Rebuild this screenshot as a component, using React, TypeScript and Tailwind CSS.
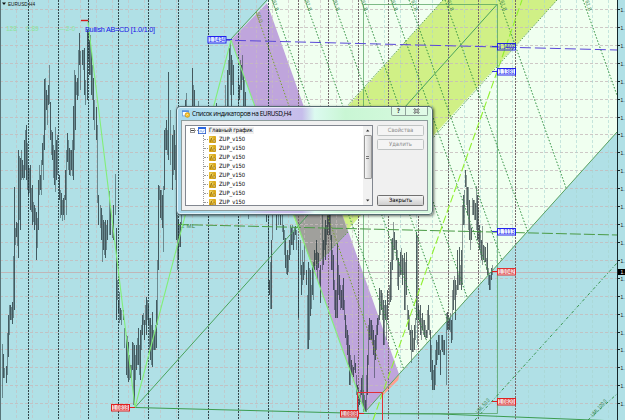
import React from 'react';
import clsx from 'clsx';

// x, high, low for every bar of the chart
const BARS = `0,366,405 2,344,398 3,354,378 4,368,378 6,366,383 7,333,375 8,315,357 9,305,335 10,305,320 11,307,320 12,302,324 13,256,318 14,187,310
15,228,245 16,222,237 17,223,246 18,150,258 19,156,220 20,158,230 21,150,180 22,160,178 23,165,180 24,140,178 25,130,170 26,125,180 27,143,190 28,165,195 29,168,193 30,165,210 31,188,212 32,185,225 33,202,222 34,205,230 35,208,225 36,212,260 37,218,248 38,180,230 39,165,195 40,175,190 41,160,195 42,143,165 43,135,180 44,79,150 45,78,130 46,90,110 47,95,125 48,85,105 49,65,104 50,102,140 51,130,155 52,132,160 53,145,178 54,150,185 55,127,192 56,140,180 57,135,175
59,175,200 60,190,218 61,193,215 62,200,221 63,198,215 64,195,220 65,170,200 66,150,215 67,133,162 68,140,170 69,148,175 70,150,176 71,150,170 72,140,176 73,106,180 74,70,150 75,75,130 76,82,95 77,78,100 78,50,96 79,33,65 80,51,90 82,50,65 83,50,70 84,48,95 85,80,105 87,30,100 88,20,60 89,40,75 90,35,75 91,50,95 92,65,100 93,78,120 94,100,130 96,107,140 97,125,203 98,195,225
100,205,228 101,208,240 102,215,262 103,220,250 104,222,255 105,220,258 106,225,250 107,220,240 109,191,235 110,205,235 112,225,238 113,205,240 115,174,215 116,228,320 117,280,300 118,300,313 119,292,323 120,308,320 121,310,325 123,310,320 124,328,348 126,335,375 127,336,378 128,342,382 129,355,380 130,365,378 131,365,378 132,342,370 133,343,405 134,345,405 135,355,380 136,345,370 137,338,365 138,328,365 139,345,375 140,330,380 141,325,350 142,315,335 143,313,325 144,320,340 145,305,325 146,297,335 147,300,320 148,305,325 149,318,350 150,318,360 151,325,365 152,312,367 153,330,350 154,332,350 155,325,350 156,300,348 157,260,325
158,185,270 159,186,200 160,190,218 161,190,220 162,195,228 163,186,252 164,130,190 165,128,150 166,120,150 167,130,155 168,72,160 170,110,165 172,135,190 173,125,175 174,130,170 175,145,180 176,208,240 177,215,270 178,220,260 179,225,247 180,222,247 181,210,225 185,100,106 186,93,106 192,68,106 193,85,106 194,90,106 198,101,106 216,103,106 225,85,106 227,70,106 228,60,106 229,48,75 230,42,95 231,55,106 232,60,85 233,65,95 238,77,105 239,85,100 240,60,90 241,65,90 242,55,80 243,75,106 244,80,106 245,92,106
248,212,219 266,212,222 268,212,290 269,280,295 270,262,309 271,240,309 272,212,240 276,212,230 278,213,225 280,212,225 282,212,232 283,225,240 284,230,255 285,238,268 286,255,274 287,250,275 288,255,272 289,240,260 290,225,255 291,228,245 292,225,245 293,232,250 294,227,240 295,226,235 296,230,250 298,240,318 300,240,275 301,265,295 302,250,285 303,262,280 304,245,275 306,270,285 307,295,349 308,262,349 309,268,340 310,270,316 311,285,309 312,265,295 313,262,300 314,250,270 315,253,260 316,240,270 317,252,280 318,253,268 319,270,285 320,265,303
322,212,270 323,240,265 324,228,250 325,220,260 326,225,245 327,212,235 328,212,225 329,213,235 330,212,240 331,235,270 332,250,270 333,255,290 334,280,310 335,290,318 336,290,318 337,243,318 338,265,295 339,275,300 340,285,310 341,290,308 342,285,310 343,278,310 344,300,320 345,315,338 346,325,345 347,330,355 348,335,365 349,345,385 350,355,385 351,360,375 352,365,375 353,367,377 354,355,370 355,363,373 356,375,395 357,385,405 358,388,408 359,395,405 360,390,402 361,378,395 362,375,405 363,390,410 364,395,411 365,400,411 366,375,412 367,355,395
368,325,365 369,318,340 370,320,340 371,320,340 372,325,345 373,330,355 374,340,378 375,335,360 376,325,350 377,318,335 378,315,325 379,288,320 380,290,315 381,290,310 382,293,320 383,300,345 384,305,345 385,300,320 386,305,340 387,290,320 389,285,305 390,262,302 391,239,300 392,238,270 393,222,260 394,232,250 395,240,250 396,240,260 397,250,286 398,258,290 399,262,277 400,252,275 401,248,275 402,255,285 403,258,275 404,253,310 405,262,310 406,252,295 407,305,320 408,310,330 409,315,335 410,330,350 411,325,363 412,330,352 413,338,352 414,325,350 415,318,340 416,232,320 417,235,345 418,305,320 419,310,325 420,305,335
421,318,340 422,313,330 423,320,335 424,320,337 425,325,339 426,330,338 427,310,338 428,305,330 429,315,335 430,330,372 431,345,380 432,360,390 433,370,390 434,365,390 435,350,385 436,340,365 437,342,360 438,335,355 439,335,355 440,350,375 441,335,350 442,335,352 443,340,355 444,340,355 446,313,385 447,312,330 448,315,330 449,318,330 450,313,332 451,320,343 452,290,340 453,280,310 454,276,300 455,280,320 456,285,295 457,250,290 458,275,290 459,247,285 460,265,285 461,250,290 462,205,285
463,195,225 464,190,225 465,170,187 466,175,205 467,187,215 468,187,230 469,200,240 470,225,250 471,228,240 472,198,215 473,200,215 474,200,220 475,203,220 476,186,230 477,195,240 478,208,240 479,225,250 480,230,255 481,240,260 482,226,265 483,245,260 484,246,262 485,247,262 486,258,270 487,243,275 488,268,285 489,275,290 490,275,290 491,268,280 492,265,275`
  .split(/\s+/)
  .map(b => b.split(',').map(Number));

const toPath = (bars: number[][]) => bars.map(([x, hi, lo]) => `M${x + 0.5} ${hi}V${lo}`).join('');
const darkBars = toPath(BARS.filter((_, i) => i % 2 === 0));
const lightBars = toPath(BARS.filter((_, i) => i % 2 === 1));

const DAY_LINES = [28, 58, 88, 118, 148, 178, 208, 238, 268, 298, 328, 358, 388, 418, 448, 478, 515];
const ROWS = Array.from({ length: 24 }, (_, i) => Math.round(9 + i * 17.92) + 0.5);
const COLS = Array.from({ length: 38 }, (_, i) => 16.5 + i * 16);
const FAN = [272, 305, 333, 361, 391, 409, 445, 499, 583];
const FAN_LABELS = [272, 305, 333, 361, 391, 411, 447, 500, 585];

const TAGS = [
  { x: 208, y: 36.5, text: '1.1434', color: '#2222ee', fill: '#d8e8ff' },
  { x: 497.5, y: 43.5, text: '1.1403', color: '#2222dd', fill: 'none' },
  { x: 497.5, y: 68.5, text: '1.1381', color: '#2222ee', fill: '#f0f6ff' },
  { x: 497.5, y: 228.5, text: '1.1113', color: '#2222ee', fill: '#f0f6ff' },
  { x: 497.5, y: 268.5, text: '1.1042', color: '#e03030', fill: '#f4d8d8' },
  { x: 497.5, y: 398.5, text: '1.0820', color: '#e02020', fill: '#f4d8d8' },
  { x: 111.5, y: 404.5, text: '1.0818', color: '#e02020', fill: '#f4d8d8' },
  { x: 340.5, y: 410.5, text: '1.0808', color: '#e02020', fill: '#e4c8cc' },
];

const Chart: React.FC = () => (
  <svg width="625" height="420" viewBox="0 0 625 420" className="block font-['Liberation_Sans',sans-serif]">
    <rect width="625" height="420" fill="#b0e0e6" />

    {/* Pitchfork zones */}
    <path d="M231 40L269 0H617V132L365 412Z" fill="#f0fff0" />
    <path d="M443 0H557L313 268L280 182Z" fill="#d0f086" />
    <path d="M231 40L267 3L399 374L365 412Z" fill="#bfa5dc" />
    <path d="M280 178L324 163L348 232L313 268Z" fill="#a0a09c" />
    <path d="M381 394L399 375L398 380L383 395Z" fill="#ffa090" stroke="#ffa090" strokeWidth="0.5" />

    {/* Grid */}
    <g stroke="#c6babb" strokeWidth="1" strokeDasharray="3 2" strokeOpacity="0.8">
      {ROWS.map(y => <path key={y} d={`M0 ${y}H617`} />)}
    </g>
    <g strokeWidth="1" strokeDasharray="3 2" strokeOpacity="0.6">
      {COLS.map(x => <path key={x} d={`M${x} 0V420`} stroke={x > 370 ? '#a8d4d0' : '#c8bcbe'} />)}
    </g>
    <path d="M0 272.5H617" stroke="#c0b6b8" />
    <g strokeWidth="1" strokeDasharray="2 1">
      {DAY_LINES.map(x => <path key={x} d={`M${x + 0.5} 0V420`} stroke={x > 290 ? '#75696c' : '#33474b'} />)}
    </g>

    <g strokeWidth="1" fill="none">
      <path d={lightBars} stroke="#1c2c32" strokeOpacity="0.48" />
      <path d={darkBars} stroke="#1c2c32" strokeOpacity="0.74" />
    </g>
    <path d="M0.5 0V420" stroke="#587579" />

    {/* Fan */}
    <g stroke="#2f9040" strokeWidth="1" strokeDasharray="1.5 1.8">
      {FAN.map(x => {
        const y = Math.min((817 - 1.11 * x) / 1.396, (617 - x) / 0.357);
        return <path key={x} d={`M${x} 0L${x + y * 0.357} ${y}`} />;
      })}
      <path d="M256 12L386 382" stroke="#78a030" />
    </g>
    <g fontSize="5.5" fill="#35834a">
      {FAN_LABELS.map(x => <text key={x} transform={`translate(${x} 1) rotate(70)`}>61.8</text>)}
      <text transform="translate(256 13) rotate(70)" fill="#709838">50.0</text>
      <text x="181" y="228" fontSize="6" textLength="14">2 ML</text>
      <text transform="translate(478 414) rotate(-48)" fontSize="5.5" textLength="18" lengthAdjust="spacingAndGlyphs">UML 50.0</text>
      <text transform="translate(593 417) rotate(-48)" fontSize="5.5" textLength="21" lengthAdjust="spacingAndGlyphs">UML 100.0</text>
    </g>

    {/* Trend lines */}
    <g fill="none" strokeWidth="1">
      <path d="M135 407.5L497 4.5" stroke="#4aa35c" />
      <path d="M231 39L267 0M365 412L617 132" stroke="#58a060" />
      <path d="M135 407.5L365 413.5L440 414L617 421" stroke="#3c9c50" />
      <path d="M363.5 4.5H497.5V413.5H400M363.5 4.5V412" stroke="#4c9c58" strokeOpacity="0.7" />
      <path d="M475 420L617 263M588 420L617 394" stroke="#3b9650" strokeDasharray="3 2 1 2" />
      <path d="M443 0L348 105M557 0L433 138M348 232L313 268" stroke="#5aa050" strokeDasharray="1.5 1.5" />
      <path d="M178 224.5L617 235" stroke="#4a9a45" strokeDasharray="11 3" />
      <path d="M220 40L617 50" stroke="#5a48d8" strokeDasharray="11 4" />
      <path d="M88 22L135 407.5L231 40L365 412" stroke="#82ee78" strokeWidth="1.1" />
      <path d="M373 420L497 72L522 0" stroke="#90f030" strokeDasharray="8 3" strokeWidth="1.1" />
      <path d="M357.5 421V392.5H382.5V421" stroke="#e03038" />
    </g>
    <path d="M81 20.5H88" stroke="#d81818" strokeWidth="1.4" />

    {TAGS.map(t => (
      <g key={t.text}>
        <rect x={t.x} y={t.y} width="18" height="6.5" fill={t.fill} stroke={t.color} />
        <text x={t.x + 1} y={t.y + 5.7} fontSize="6.5" textLength="16" lengthAdjust="spacingAndGlyphs" fill={t.color}>{t.text}</text>
      </g>
    ))}
    <path d="M492 46.5H497M492 71.5H497M492 231.5H497M226 39.5H232" stroke="#3333dd" />
    <path d="M492 271.5H497M492 401.5H497M130 407.5H135M359 413.5H364" stroke="#e02020" />

    <text x="85" y="31.5" fontSize="7.3" fill="#1717e8" textLength="70">Bullish AB=CD [1.0/1.0]</text>
    <text x="6" y="31" fontSize="6.5" fill="#8de39a">128</text>
    <text x="26" y="31" fontSize="6.5" fill="#8de39a">0.89</text>
    <text x="57" y="31" fontSize="6.5" fill="#8de39a">----2-0</text>
    <path d="M2 2.5H6L4 5Z" fill="#111" />
    <text x="8" y="6" fontSize="6" fill="#111" textLength="27" lengthAdjust="spacingAndGlyphs">EURUSD,H4</text>

    {/* Price axis */}
    <rect x="617" width="8" height="420" fill="#b0e0e6" />
    <path d="M617.5 0V420" stroke="#16282b" />
    {ROWS.filter(y => y < 418).map(y => (
      <g key={y}>
        <path d={`M618 ${y}H620`} stroke="#16282b" />
        <text x="620.5" y={y + 2} fontSize="6" fill="#111" textLength="4" lengthAdjust="spacingAndGlyphs">1.</text>
      </g>
    ))}
    <rect x="618" y="269" width="7" height="6" fill="#000" />
    <text x="620.5" y="274" fontSize="5.5" fill="#fff" textLength="4" lengthAdjust="spacingAndGlyphs">1.</text>
  </svg>
);

const IndicatorIcon: React.FC = () => (
  <svg width="7" height="7" viewBox="0 0 7 7" className="shrink-0">
    <rect width="7" height="7" rx="0.7" fill="#dba91c" />
    <rect x="0.6" y="0.6" width="3.6" height="3.6" fill="#f4d860" />
    <path d="M1 5.8C2.4 5.8 1.8 1.3 3.6 1.3M1.4 3.2H3.4" stroke="#8a6508" strokeWidth="0.7" fill="none" />
    <circle cx="5.1" cy="5" r="1.2" fill="#f8e69a" stroke="#8e6506" strokeWidth="0.6" />
  </svg>
);

const WindowIcon: React.FC = () => (
  <svg width="8" height="7" viewBox="0 0 8 7" className="shrink-0">
    <rect x="0.4" y="0.4" width="7.2" height="6.2" fill="#f4f9ff" stroke="#2458cc" strokeWidth="0.8" />
    <rect width="8" height="2" fill="#2864e0" />
    <path d="M1.5 4.8L3 3.6L4.5 5L6.4 3.4" stroke="#4a80e0" strokeWidth="0.7" fill="none" />
  </svg>
);

const DialogButton: React.FC<{ label: string; active?: boolean }> = ({ label, active }) => (
  <button
    className={clsx(
      'flex h-[11px] w-[47px] items-center justify-center rounded-[1.5px] border text-[5.8px] leading-none',
      active
        ? 'border-[#707070] bg-linear-to-b from-[#f4f4f4] to-[#cfcfcf] text-black'
        : 'border-[#bfc3c3] bg-[#f4f4f4] text-[#8c8c8c]'
    )}
  >
    {label}
  </button>
);

const IndicatorsDialog: React.FC = () => (
  <div className="absolute left-[176px] top-[106px] flex h-[109px] w-[257px] flex-col overflow-hidden rounded-[4px] border border-[#536b70] bg-[linear-gradient(90deg,#a9d9ed_0%,#b8e2ef_25%,#c9c3ed_36%,#c6bdeb_49%,#dcfaf0_54%,#c9f6d4_66%,#d8fae0_100%)] px-1 pb-[3px] shadow-[1px_1px_3px_rgba(0,0,0,0.6),inset_0_0_0_1px_rgba(255,255,255,0.65)] font-['DejaVu_Sans_Condensed','DejaVu_Sans',sans-serif]">
    <div className="flex h-[13px] shrink-0 justify-between">
      <div className="flex items-center gap-[2px] pl-px pt-px">
        <svg width="8" height="8" viewBox="0 0 8 8">
          <rect x="0.4" y="0.9" width="6" height="5" fill="#fff" stroke="#6c9ee0" strokeWidth="0.8" />
          <rect y="0.5" width="6.8" height="1.4" fill="#4c8ae0" />
          <circle cx="5.4" cy="5" r="2.4" fill="#f4be24" stroke="#b98511" strokeWidth="0.5" />
          <path d="M4.4 5.8L5.4 4L6.2 5.4" stroke="#fff4c0" strokeWidth="0.6" fill="none" />
        </svg>
        <span className="whitespace-nowrap font-['Open_Sans',sans-serif] text-[6.4px] leading-none tracking-[-0.37px] text-black">Список индикаторов на EURUSD,H4</span>
      </div>
      <div className="flex h-[9px] w-[37px] rounded-b-[2px] border border-t-0 border-[#8fa39a] bg-white/25 font-bold text-[#444]">
        <span className="flex w-[14px] items-center justify-center border-r border-[#8fa39a] text-[6.5px] leading-none">?</span>
        <span className="flex flex-1 items-center justify-center">
          <svg width="7" height="6" viewBox="0 0 7 6">
            <path d="M1 0.8L6 5.2M6 0.8L1 5.2" stroke="#4c5550" strokeWidth="2" />
            <path d="M1.2 1L5.8 5M5.8 1L1.2 5" stroke="#fff" strokeWidth="0.8" />
          </svg>
        </span>
      </div>
    </div>
    <div className="flex min-h-0 flex-1 justify-between border border-[#8d9c9c] bg-[#f0f0f0] px-[3px] py-[4px]">
      <div className="flex w-[188px] border border-[#828790] bg-white">
        <div className="flex-1 overflow-hidden pl-[4px] text-[5.8px] leading-none text-black">
          <div className="flex h-[9px] items-center">
            <span className="flex h-[5px] w-[5px] items-center justify-center border border-[#999]">
              <span className="h-px w-[3px] bg-[#444]" />
            </span>
            <span className="w-[3px] border-t border-dotted border-[#999]" />
            <WindowIcon />
            <span className="ml-[2px] bg-[#f0f0f0] px-px py-[1px] tracking-[-0.15px]">Главный график</span>
          </div>
          <div className="ml-[13px] h-[72px] border-l border-dotted border-[#999]">
            {Array.from({ length: 8 }, (_, i) => (
              <div key={i} className="flex h-[9px] items-center">
                <span className="mr-px w-[4px] border-t border-dotted border-[#999]" />
                <IndicatorIcon />
                <span className="ml-[3px]">ZUP_v150</span>
              </div>
            ))}
          </div>
        </div>
        <div className="flex w-[9px] flex-col items-center bg-[#f1f1f1]">
          <svg width="9" height="9" viewBox="0 0 9 9"><path d="M3 5.5H6.4L4.7 3.5Z" fill="#333" /></svg>
          <div className="flex h-[44px] w-[8px] flex-col items-center justify-center gap-px rounded-[1px] border border-[#979797] bg-linear-to-r from-[#f5f5f5] to-[#cdcdcd]">
            <span className="h-px w-[3px] bg-[#777]" />
            <span className="h-px w-[3px] bg-[#777]" />
          </div>
          <svg width="9" height="9" viewBox="0 0 9 9" className="mt-auto"><path d="M3 3.5H6.4L4.7 5.5Z" fill="#333" /></svg>
        </div>
      </div>
      <div className="flex flex-col gap-[3px]">
        <DialogButton label="Свойства" />
        <DialogButton label="Удалить" />
        <div className="mt-auto">
          <DialogButton label="Закрыть" active />
        </div>
      </div>
    </div>
  </div>
);

export default function App() {
  return (
    <div className="relative h-[420px] w-[625px] overflow-hidden bg-[#b0e0e6]">
      <Chart />
      <IndicatorsDialog />
    </div>
  );
}
